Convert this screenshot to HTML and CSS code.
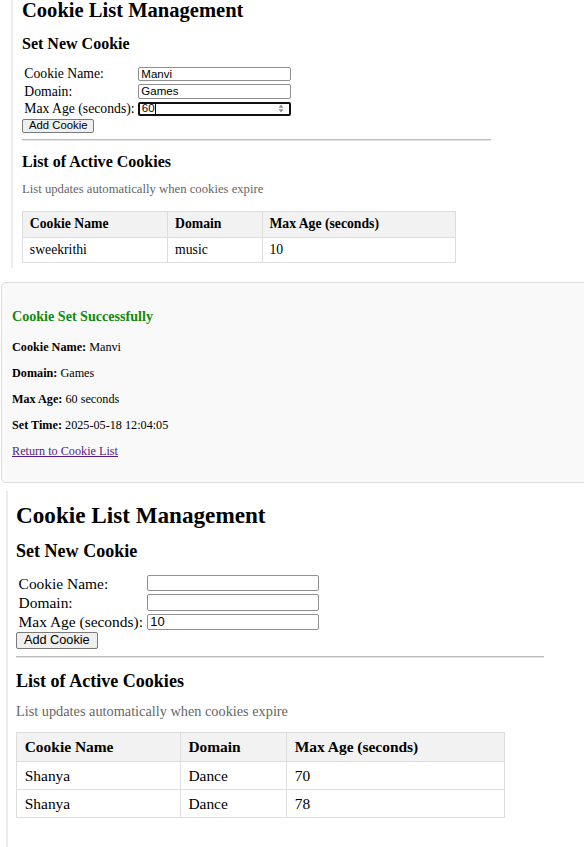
FILE: index.html
```html
<!DOCTYPE html>
<html lang="en">
<head>
<meta charset="utf-8">
<title>Cookie List Management</title>
<link rel="stylesheet" href="styles.css">
</head>
<body>

<section class="app app--first">
  <h1 class="app__title">Cookie List Management</h1>
  <h3 class="app__heading app__heading--form">Set New Cookie</h3>
  <form class="cookie-form">
    <div class="cookie-form__fields">
      <label class="cookie-form__label" for="a-name">Cookie Name:</label>
      <input class="cookie-form__input" id="a-name" type="text" value="Manvi">
      <label class="cookie-form__label" for="a-domain">Domain:</label>
      <input class="cookie-form__input" id="a-domain" type="text" value="Games">
      <span class="cookie-form__label">Max Age (seconds):</span>
      <div class="cookie-form__input cookie-form__input--focus">
        <span>60</span><span class="caret"></span>
        <svg class="spinner" viewBox="0 0 6 10" width="6" height="9"><path d="M3 0.6 L5.6 4.2 H0.4 Z M3 9.4 L0.4 5.8 H5.6 Z" fill="#8a8a8a"/></svg>
      </div>
    </div>
    <button class="cookie-form__button" type="button">Add Cookie</button>
  </form>
  <hr class="divider">
  <h3 class="app__heading app__heading--list">List of Active Cookies</h3>
  <p class="note">List updates automatically when cookies expire</p>
  <table class="cookie-table">
    <thead>
      <tr><th class="col-name">Cookie Name</th><th class="col-domain">Domain</th><th class="col-age">Max Age (seconds)</th></tr>
    </thead>
    <tbody>
      <tr><td>sweekrithi</td><td>music</td><td>10</td></tr>
    </tbody>
  </table>
</section>

<section class="result">
  <h3 class="result__title">Cookie Set Successfully</h3>
  <p class="result__line"><strong>Cookie Name:</strong> Manvi</p>
  <p class="result__line"><strong>Domain:</strong> Games</p>
  <p class="result__line"><strong>Max Age:</strong> 60 seconds</p>
  <p class="result__line"><strong>Set Time:</strong> 2025-05-18 12:04:05</p>
  <p class="result__line"><a class="result__link" href="#">Return to Cookie List</a></p>
</section>

<section class="app app--second">
  <h1 class="app__title">Cookie List Management</h1>
  <h3 class="app__heading app__heading--form">Set New Cookie</h3>
  <form class="cookie-form">
    <div class="cookie-form__fields">
      <label class="cookie-form__label" for="b-name">Cookie Name:</label>
      <input class="cookie-form__input" id="b-name" type="text" value="">
      <label class="cookie-form__label" for="b-domain">Domain:</label>
      <input class="cookie-form__input" id="b-domain" type="text" value="">
      <label class="cookie-form__label" for="b-age">Max Age (seconds):</label>
      <input class="cookie-form__input" id="b-age" type="text" value="10">
    </div>
    <button class="cookie-form__button" type="button">Add Cookie</button>
  </form>
  <hr class="divider">
  <h3 class="app__heading app__heading--list">List of Active Cookies</h3>
  <p class="note">List updates automatically when cookies expire</p>
  <table class="cookie-table">
    <thead>
      <tr><th class="col-name">Cookie Name</th><th class="col-domain">Domain</th><th class="col-age">Max Age (seconds)</th></tr>
    </thead>
    <tbody>
      <tr><td>Shanya</td><td>Dance</td><td>70</td></tr>
      <tr><td>Shanya</td><td>Dance</td><td>78</td></tr>
    </tbody>
  </table>
</section>

</body>
</html>
```

FILE: styles.css
```css
* { box-sizing: border-box; }

html, body {
  margin: 0;
  padding: 0;
  background: #fff;
  overflow: hidden;
}

body {
  font-family: "Liberation Serif", "Times New Roman", serif;
  color: #000;
}

/* ---------- app panel ---------- */
.app {
  display: flow-root;
  border-left: 2px solid #ececec;
}

.app--first {
  --fields-top: 13.3px;
  --table-top: 13px;
  font-size: 13.7px;
  margin-left: 11px;
  padding: 0 0 5px 9px;
}

.app--second {
  --fields-top: 12.5px;
  --table-top: 12px;
  font-size: 15.44px;
  margin: 8px 0 0 6px;
  padding: 13.1px 0 60px 8px;
}

.app__title {
  margin: 0;
  font-size: 1.5em;
  line-height: 1;
  font-weight: bold;
}

.app__heading {
  font-size: 1.17em;
  line-height: 1.25;
  font-weight: bold;
  margin: 0;
}

.app__heading--form { margin-top: 13px; }
.app__heading--list { margin-top: 0.7em; }

/* ---------- form ---------- */
.cookie-form { margin: var(--fields-top) 0 0; }

.cookie-form__fields {
  display: grid;
  grid-template-columns: 8.47em 11.17em;
  grid-auto-rows: 1.05em;
  row-gap: 3px;
}

.cookie-form__label {
  align-self: center;
  line-height: 1;
  padding-left: 0.17em;
  white-space: nowrap;
}

.cookie-form__input {
  width: 100%;
  height: 100%;
  margin: 0;
  border: 1px solid #8f8f8f;
  border-radius: 2px;
  padding: 0 0.2em;
  background: #fff;
  font-family: "Liberation Sans", Arial, sans-serif;
  font-size: 0.84em;
  color: #000;
  outline: none;
}

.cookie-form__input--focus {
  display: flex;
  align-items: center;
  border: 2px solid #111;
  padding: 0 0.45em 0 0.15em;
  line-height: 1;
}

.caret {
  width: 1px;
  height: 1.05em;
  background: #000;
}

.spinner { margin-left: auto; }

.cookie-form__button {
  display: block;
  width: 6.41em;
  height: 1.285em;
  margin-top: 2.5px;
  padding: 0;
  border: 1px solid #7a7a7a;
  border-radius: 2px;
  background: #efefef;
  font-family: "Liberation Sans", Arial, sans-serif;
  font-size: 0.825em;
  line-height: 1;
  color: #000;
}

.divider {
  width: 34.2em;
  height: 0;
  margin: 0.45em 0 0;
  border: 0;
  border-top: 1px solid #bdbdbd;
  border-bottom: 1px solid #e4e4e4;
}

.note {
  margin: 10px 0 0;
  font-size: 0.927em;
  line-height: 1.2;
  color: #666;
}

/* ---------- table ---------- */
.cookie-table {
  margin-top: var(--table-top);
  width: 31.62em;
  table-layout: fixed;
  border-collapse: collapse;
}

.cookie-table th,
.cookie-table td {
  border: 1px solid #ddd;
  padding: 0.3em 0.5em;
  line-height: 1.15;
  text-align: left;
  font-size: 1em;
}

.cookie-table th {
  padding-top: 0.34em;
  padding-bottom: 0.34em;
  background: #f2f2f2;
  font-weight: bold;
}

.col-name { width: 10.6em; }
.col-domain { width: 6.89em; }
.col-age { width: 14.13em; }

/* ---------- result box ---------- */
.result {
  margin: 14px -12px 0 1px;
  padding: 25.2px 10px 24px;
  background: #f9f9f9;
  border: 1px solid #dcdcdc;
  border-radius: 5px;
  font-size: 12.2px;
}

.result__title {
  margin: 0;
  padding-bottom: 4px;
  font-size: 14.1px;
  line-height: 16px;
  font-weight: bold;
  color: #108a10;
}

.result__line {
  margin: 12px 0 0;
  line-height: 14px;
}

.result__link { color: #551a8b; }
```
